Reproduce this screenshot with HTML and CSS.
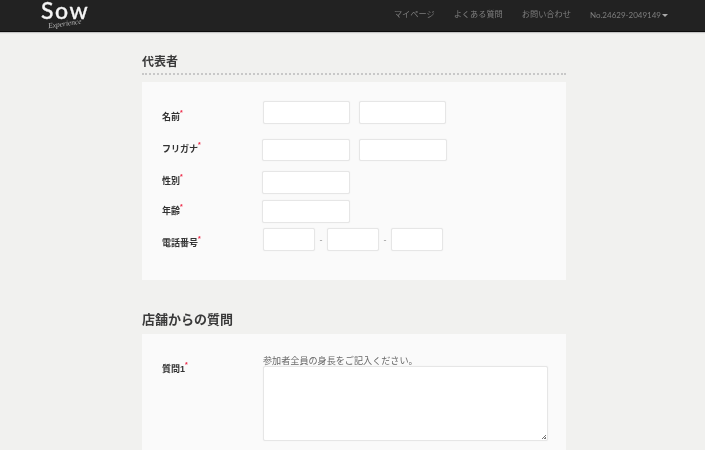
FILE: index.html
```html
<!DOCTYPE html>
<html lang="ja">
<head>
<meta charset="utf-8">
<title>Sow Experience</title>
<link rel="stylesheet" href="styles.css">
</head>
<body>
<header class="topbar">
  <a class="logo"><span class="logo-main">Sow</span><span class="logo-sub">Experience</span></a>
  <nav class="nav">
    <a>マイページ</a>
    <a>よくある質問</a>
    <a>お問い合わせ</a>
    <a class="account">No.24629-2049149<span class="caret"></span></a>
  </nav>
</header>
<main class="content">
  <h2 class="heading heading-dotted">代表者</h2>
  <section class="panel panel-rep">
    <div class="row row-name">
      <label class="label">名前<sup>*</sup></label>
      <div class="fields fields-a"><input class="box w87"><input class="box w87"></div>
    </div>
    <div class="row row-kana">
      <label class="label">フリガナ<sup>*</sup></label>
      <div class="fields"><input class="box w88 short"><input class="box w88 short"></div>
    </div>
    <div class="row row-sex">
      <label class="label">性別<sup>*</sup></label>
      <div class="fields"><input class="box w88"></div>
    </div>
    <div class="row row-age">
      <label class="label">年齢<sup>*</sup></label>
      <div class="fields"><input class="box w88"></div>
    </div>
    <div class="row row-tel">
      <label class="label">電話番号<sup>*</sup></label>
      <div class="fields fields-tel"><input class="box w52"><span class="dash">-</span><input class="box w52"><span class="dash">-</span><input class="box w52"></div>
    </div>
  </section>
  <h2 class="heading heading-q">店舗からの質問</h2>
  <section class="panel panel-q">
    <div class="q-row">
      <label class="label label-q">質問1<sup>*</sup></label>
      <div class="q-field">
        <p class="note">参加者全員の身長をご記入ください。</p>
        <textarea class="area"></textarea>
      </div>
    </div>
  </section>
</main>
</body>
</html>
```
FILE: styles.css
```css
* { box-sizing: border-box; }
html, body { height: 450px; overflow: hidden; }
body {
  margin: 0;
  background: #f1f1ef;
  color: #333;
  font-family: "Liberation Sans", "Noto Sans CJK JP", sans-serif;
  filter: blur(0.35px);
}
.topbar {
  height: 32px;
  background: #222;
  border-bottom: 1px solid #0c0c0c;
  box-shadow: 0 1px 1px #c4c4c4;
  display: flex;
  justify-content: space-between;
  padding: 0 37px 0 41px;
}
.logo { display: block; position: relative; width: 60px; color: #f5f5f5; }
.logo-main {
  display: block;
  font-family: "Lato", sans-serif;
  font-weight: 500;
  font-size: 23px;
  line-height: 21px;
  letter-spacing: 1.6px;
  -webkit-text-stroke: 0.3px #f5f5f5;
}
.logo-sub {
  position: absolute;
  left: 7px;
  top: 20px;
  font-family: "Liberation Serif", serif;
  font-style: italic;
  font-size: 7.5px;
  line-height: 8px;
  transform: rotate(-8deg);
  color: #bbb;
}
.nav { display: flex; gap: 19px; font-size: 8.2px; color: #7f7f7f; line-height: 30px; }
.nav a { display: block; }
.account { font-family: "Lato", "Liberation Sans", sans-serif; font-size: 8px; }
.caret {
  display: inline-block;
  margin-left: 1px;
  vertical-align: 1px;
  border-top: 3px solid #aaa;
  border-left: 3px solid transparent;
  border-right: 3px solid transparent;
}
.content { width: 424px; margin-left: 142px; }
.heading { margin: 0; font-size: 12px; font-weight: 700; color: #3a3a3a; }
.heading-dotted {
  margin-top: 21px;
  height: 22px;
  line-height: 18px;
  border-bottom: 2px dotted #c8c8c8;
}
.heading-q { margin-top: 30px; height: 24px; font-size: 13px; line-height: 20px; }
.panel { background: #fafafa; }
.panel-rep { margin-top: 7px; height: 198px; padding-top: 19px; }
.panel-q { height: 130px; padding-top: 25px; }
.row { display: flex; align-items: flex-start; }
.label {
  display: block;
  width: 120px;
  flex: none;
  padding-left: 20px;
  font-size: 9px;
  font-weight: 700;
  line-height: 12px;
  color: #333;
}
.label sup { color: #ee2a48; font-size: 7px; line-height: 0; vertical-align: 5px; font-weight: 700; }
.fields { display: flex; gap: 9px; }
.fields-a { margin-left: 1px; }
.box {
  display: block;
  height: 23px;
  margin: 0;
  padding: 0 6px;
  background: #fff;
  border: 1px solid #e6e6e6;
  border-radius: 2px;
  box-shadow: 0 0 1px #e6e6e6;
}
.short { height: 22px; }
.w87 { width: 87px; }
.w88 { width: 88px; }
.w52 { width: 52px; }
.row-kana { margin-top: 15px; }
.row-sex { margin-top: 10px; }
.row-age { margin-top: 6px; }
.row-tel { margin-top: 5px; }
.row-name .label { padding-top: 10px; }
.row-kana .label { padding-top: 4px; }
.row-sex .label { padding-top: 4px; }
.row-age .label { padding-top: 5px; }
.row-tel .label { padding-top: 9px; }
.fields-tel { margin-left: 1px; gap: 0; align-items: center; }
.dash { width: 12px; text-align: center; font-size: 9px; color: #999; }
.q-row { display: flex; align-items: flex-start; }
.label-q { width: 121px; padding-top: 4px; }
.q-field { width: 285px; }
.note { margin: 0; font-size: 9.1px; line-height: 5px; color: #666; height: 7px; }
.area {
  display: block;
  width: 285px;
  height: 75px;
  margin: 0;
  background: #fff;
  border: 1px solid #e6e6e6;
  border-radius: 2px;
  box-shadow: 0 0 1px #e6e6e6;
}
.area::-webkit-resizer {
  background: linear-gradient(135deg, transparent 55%, #777 55%, #777 70%, transparent 70%, transparent 80%, #777 80%) no-repeat right 1px bottom 1px / 5px 5px;
}
```
